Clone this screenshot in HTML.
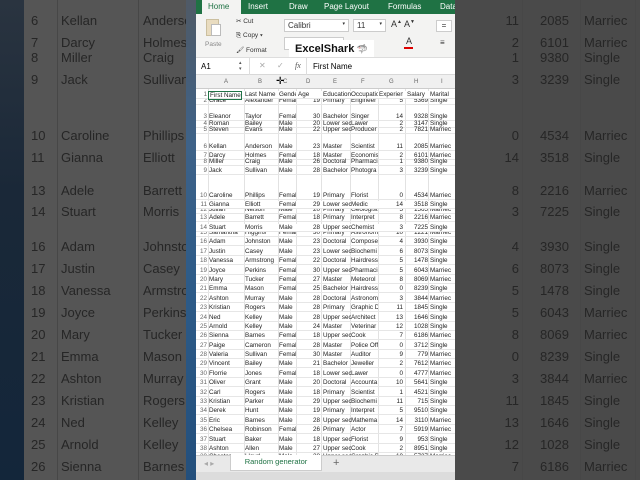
<!DOCTYPE html>
<html><head><meta charset="utf-8"><style>
*{margin:0;padding:0;box-sizing:border-box}
body{width:640px;height:480px;overflow:hidden;background:#4b4b4b;font-family:"Liberation Sans",sans-serif;position:relative}
.abs{position:absolute}
#L{left:0;top:0;width:186px;height:480px;background:#555;overflow:hidden}
#L .sky{position:absolute;left:0;top:0;width:24px;height:480px;background:linear-gradient(#2a3440,#1a2838 40%,#13263a)}
#L .r,#R .r{position:absolute;font-size:13px;color:#262626;height:14px;line-height:14px}
.vl{position:absolute;top:0;width:1px;height:480px;background:#474747}
#R{left:455px;top:0;width:185px;height:480px;background:#4a4a4a;overflow:hidden}
#strip{left:186px;top:0;width:10px;height:480px;background:linear-gradient(#505a66,#3e6288 30%,#2d5b88 60%,#234f7c)}
#W{left:196px;top:0;width:259px;height:480px;background:#fff;overflow:hidden}
.tabs{position:absolute;left:0;top:0;width:259px;height:14px;background:#1f7244;color:#fff;font-size:8px}
.tabs span{position:absolute;top:2px}
.rib{position:absolute;left:0;top:14px;width:259px;height:43px;background:#f3f3f2;font-size:6.5px;color:#333}
.fbar{position:absolute;left:0;top:57px;width:259px;height:18px;background:#fff;border-top:1px solid #ddd;border-bottom:1px solid #d8d8d8;font-size:8px}
.ch{position:absolute;left:0;top:75px;width:259px;height:14px;background:#f0f0f0;border-bottom:1px solid #ccc;font-size:6px;color:#666}
.ch span{position:absolute;top:4px}
.grid{position:absolute;left:0;top:89px;width:259px;height:366px}
.g{position:absolute;top:0;width:1px;height:366px;background:#e2e2e2}
.row{position:absolute;left:0;width:259px;height:8px;font-size:6.3px;line-height:8px;color:#222;border-bottom:1px solid #e6e6e6}
.row span{position:absolute;white-space:nowrap;overflow:hidden}
.n{left:0;width:11px;text-align:right;color:#666}
.a{left:13px;width:34px}.b{left:49px;width:33px}.c{left:83px;width:17px}
.d{left:101px;width:23px;text-align:right}.e{left:127px;width:28px}.f{left:155px;width:27px}
.gg{left:183px;width:24px;text-align:right}.h{left:210px;width:22px;text-align:right}.i{left:234px;width:25px}
.stab{position:absolute;left:0;top:455px;width:259px;height:17px;background:#e9e9e9;border-top:1px solid #ccc}
.stat{position:absolute;left:0;top:472px;width:259px;height:8px;background:#dcdcdc}
</style></head><body>
<div id="L" class="abs"><div class="sky"></div>
<div class="vl" style="left:57px"></div><div class="vl" style="left:138px"></div>
<div class="r" style="left:31px;top:14px">6</div><div class="r" style="left:61px;top:14px">Kellan</div><div class="r" style="left:143px;top:14px">Anderson</div>
<div class="r" style="left:31px;top:36px">7</div><div class="r" style="left:61px;top:36px">Darcy</div><div class="r" style="left:143px;top:36px">Holmes</div>
<div class="r" style="left:31px;top:51px">8</div><div class="r" style="left:61px;top:51px">Miller</div><div class="r" style="left:143px;top:51px">Craig</div>
<div class="r" style="left:31px;top:73px">9</div><div class="r" style="left:61px;top:73px">Jack</div><div class="r" style="left:143px;top:73px">Sullivan</div>
<div class="r" style="left:31px;top:129px">10</div><div class="r" style="left:61px;top:129px">Caroline</div><div class="r" style="left:143px;top:129px">Phillips</div>
<div class="r" style="left:31px;top:151px">11</div><div class="r" style="left:61px;top:151px">Gianna</div><div class="r" style="left:143px;top:151px">Elliott</div>
<div class="r" style="left:31px;top:184px">13</div><div class="r" style="left:61px;top:184px">Adele</div><div class="r" style="left:143px;top:184px">Barrett</div>
<div class="r" style="left:31px;top:205px">14</div><div class="r" style="left:61px;top:205px">Stuart</div><div class="r" style="left:143px;top:205px">Morris</div>
<div class="r" style="left:31px;top:240px">16</div><div class="r" style="left:61px;top:240px">Adam</div><div class="r" style="left:143px;top:240px">Johnston</div>
<div class="r" style="left:31px;top:262px">17</div><div class="r" style="left:61px;top:262px">Justin</div><div class="r" style="left:143px;top:262px">Casey</div>
<div class="r" style="left:31px;top:284px">18</div><div class="r" style="left:61px;top:284px">Vanessa</div><div class="r" style="left:143px;top:284px">Armstrong</div>
<div class="r" style="left:31px;top:306px">19</div><div class="r" style="left:61px;top:306px">Joyce</div><div class="r" style="left:143px;top:306px">Perkins</div>
<div class="r" style="left:31px;top:328px">20</div><div class="r" style="left:61px;top:328px">Mary</div><div class="r" style="left:143px;top:328px">Tucker</div>
<div class="r" style="left:31px;top:350px">21</div><div class="r" style="left:61px;top:350px">Emma</div><div class="r" style="left:143px;top:350px">Mason</div>
<div class="r" style="left:31px;top:372px">22</div><div class="r" style="left:61px;top:372px">Ashton</div><div class="r" style="left:143px;top:372px">Murray</div>
<div class="r" style="left:31px;top:394px">23</div><div class="r" style="left:61px;top:394px">Kristian</div><div class="r" style="left:143px;top:394px">Rogers</div>
<div class="r" style="left:31px;top:416px">24</div><div class="r" style="left:61px;top:416px">Ned</div><div class="r" style="left:143px;top:416px">Kelley</div>
<div class="r" style="left:31px;top:438px">25</div><div class="r" style="left:61px;top:438px">Arnold</div><div class="r" style="left:143px;top:438px">Kelley</div>
<div class="r" style="left:31px;top:460px">26</div><div class="r" style="left:61px;top:460px">Sienna</div><div class="r" style="left:143px;top:460px">Barnes</div>
</div>
<div id="strip" class="abs"></div>
<div id="R" class="abs">
<div class="vl" style="left:67px"></div><div class="vl" style="left:125px"></div><div class="vl" style="left:180px"></div>
<div class="r" style="left:40px;top:14px;width:24px;text-align:right">11</div><div class="r" style="left:85px;top:14px">2085</div><div class="r" style="left:129px;top:14px">Marriec</div>
<div class="r" style="left:40px;top:36px;width:24px;text-align:right">2</div><div class="r" style="left:85px;top:36px">6101</div><div class="r" style="left:129px;top:36px">Marriec</div>
<div class="r" style="left:40px;top:51px;width:24px;text-align:right">1</div><div class="r" style="left:85px;top:51px">9380</div><div class="r" style="left:129px;top:51px">Single</div>
<div class="r" style="left:40px;top:73px;width:24px;text-align:right">3</div><div class="r" style="left:85px;top:73px">3239</div><div class="r" style="left:129px;top:73px">Single</div>
<div class="r" style="left:40px;top:129px;width:24px;text-align:right">0</div><div class="r" style="left:85px;top:129px">4534</div><div class="r" style="left:129px;top:129px">Marriec</div>
<div class="r" style="left:40px;top:151px;width:24px;text-align:right">14</div><div class="r" style="left:85px;top:151px">3518</div><div class="r" style="left:129px;top:151px">Single</div>
<div class="r" style="left:40px;top:184px;width:24px;text-align:right">8</div><div class="r" style="left:85px;top:184px">2216</div><div class="r" style="left:129px;top:184px">Marriec</div>
<div class="r" style="left:40px;top:205px;width:24px;text-align:right">3</div><div class="r" style="left:85px;top:205px">7225</div><div class="r" style="left:129px;top:205px">Single</div>
<div class="r" style="left:40px;top:240px;width:24px;text-align:right">4</div><div class="r" style="left:85px;top:240px">3930</div><div class="r" style="left:129px;top:240px">Single</div>
<div class="r" style="left:40px;top:262px;width:24px;text-align:right">6</div><div class="r" style="left:85px;top:262px">8073</div><div class="r" style="left:129px;top:262px">Single</div>
<div class="r" style="left:40px;top:284px;width:24px;text-align:right">5</div><div class="r" style="left:85px;top:284px">1478</div><div class="r" style="left:129px;top:284px">Single</div>
<div class="r" style="left:40px;top:306px;width:24px;text-align:right">5</div><div class="r" style="left:85px;top:306px">6043</div><div class="r" style="left:129px;top:306px">Marriec</div>
<div class="r" style="left:40px;top:328px;width:24px;text-align:right">8</div><div class="r" style="left:85px;top:328px">8069</div><div class="r" style="left:129px;top:328px">Marriec</div>
<div class="r" style="left:40px;top:350px;width:24px;text-align:right">0</div><div class="r" style="left:85px;top:350px">8239</div><div class="r" style="left:129px;top:350px">Single</div>
<div class="r" style="left:40px;top:372px;width:24px;text-align:right">3</div><div class="r" style="left:85px;top:372px">3844</div><div class="r" style="left:129px;top:372px">Marriec</div>
<div class="r" style="left:40px;top:394px;width:24px;text-align:right">11</div><div class="r" style="left:85px;top:394px">1845</div><div class="r" style="left:129px;top:394px">Single</div>
<div class="r" style="left:40px;top:416px;width:24px;text-align:right">13</div><div class="r" style="left:85px;top:416px">1646</div><div class="r" style="left:129px;top:416px">Single</div>
<div class="r" style="left:40px;top:438px;width:24px;text-align:right">12</div><div class="r" style="left:85px;top:438px">1028</div><div class="r" style="left:129px;top:438px">Single</div>
<div class="r" style="left:40px;top:460px;width:24px;text-align:right">7</div><div class="r" style="left:85px;top:460px">6186</div><div class="r" style="left:129px;top:460px">Marriec</div>
</div>

<div id="W" class="abs">
<div class="tabs">
<div class="abs" style="left:6px;top:0;width:39px;height:14px;background:#f3f3f2"></div>
<span style="left:12px;color:#1f7244">Home</span><span style="left:52px">Insert</span><span style="left:93px">Draw</span><span style="left:128px">Page Layout</span><span style="left:192px">Formulas</span><span style="left:244px">Data</span>
</div>
<div class="rib">
<div class="abs" style="left:10px;top:5px;width:13px;height:17px;background:#e9dcc0;border:1px solid #cbbf9f"></div>
<div class="abs" style="left:15px;top:10px;width:10px;height:12px;background:#fff;border:1px solid #bbb"></div>
<span class="abs" style="left:9px;top:27px;color:#888">Paste</span>
<span class="abs" style="left:40px;top:3px">✂ Cut</span>
<span class="abs" style="left:40px;top:18px">⎘ Copy ▾</span>
<span class="abs" style="left:40px;top:32px">🖌 Format</span>
<div class="abs" style="left:88px;top:5px;width:65px;height:13px;background:#fff;border:1px solid #ccc;font-size:8px;padding:1px 3px">Calibri<span style="float:right;font-size:5px">▾</span></div>
<div class="abs" style="left:157px;top:5px;width:33px;height:13px;background:#fff;border:1px solid #ccc;font-size:8px;padding:1px 3px">11<span style="float:right;font-size:5px">▾</span></div>
<span class="abs" style="left:195px;top:5px;font-size:9px">A<sup style="font-size:5px">▲</sup> A<sup style="font-size:5px">▼</sup></span>
<div class="abs" style="left:240px;top:6px;width:16px;height:12px;border:1px solid #ccc;background:#fff;font-size:8px;text-align:center">=</div>
<div class="abs" style="left:88px;top:23px;width:60px;height:13px;background:#fff;border:1px solid #ccc"></div>
<span class="abs" style="left:210px;top:22px;font-size:9px">A</span>
<div class="abs" style="left:208px;top:33px;width:9px;height:2px;background:#d00"></div>
<span class="abs" style="left:244px;top:24px;font-size:8px">≡</span>
<div class="abs" style="left:93px;top:26px;width:85px;height:17px;background:#fff;font-size:11px;font-weight:bold;color:#111;padding:3px 0 0 6px">ExcelShark<span style="color:#5a8aa8;font-size:9px"> 🦈</span></div>
</div>
<div class="fbar">
<span class="abs" style="left:5px;top:4px">A1</span><span class="abs" style="left:43px;top:2px;font-size:5px;color:#555">▴<br>▾</span>
<div class="abs" style="left:53px;top:0;width:1px;height:17px;background:#ddd"></div>
<span class="abs" style="left:63px;top:3px;color:#aaa">✕</span><span class="abs" style="left:81px;top:3px;color:#aaa">✓</span>
<span class="abs" style="left:99px;top:3px;font-style:italic;font-family:'Liberation Serif',serif;color:#555">fx</span>
<div class="abs" style="left:110px;top:0;width:1px;height:17px;background:#ddd"></div>
<span class="abs" style="left:117px;top:4px">First Name</span>
</div>
<div class="ch">
<span style="left:28px">A</span><span style="left:62px">B</span><span style="left:87px">C</span><span style="left:110px">D</span><span style="left:137px">E</span><span style="left:165px">F</span><span style="left:193px">G</span><span style="left:218px">H</span><span style="left:245px">I</span>
<span style="left:80px;top:1px;font-size:10px;color:#000">✛</span>
</div>
<div class="grid">
<div class="g" style="left:12px"></div><div class="g" style="left:48px"></div><div class="g" style="left:82px"></div><div class="g" style="left:100px"></div><div class="g" style="left:125px"></div><div class="g" style="left:154px"></div><div class="g" style="left:182px"></div><div class="g" style="left:209px"></div><div class="g" style="left:232px"></div>
</div>
<div class="abs" style="left:0;top:89px;width:259px;height:366px;overflow:hidden">
<div class="row" style="top:8px;background:transparent"><span class="n">2</span><span class="a">Grace</span><span class="b">Alexander</span><span class="c">Femal</span><span class="d">19</span><span class="e">Primary</span><span class="f">Engineer</span><span class="gg">5</span><span class="h">5369</span><span class="i">Single</span></div>
<div class="row" style="top:2px;background:#fff"><span class="n">1</span><span class="a" style="border:1px solid #217346;height:9px;line-height:7px;left:12px;padding-left:1px">First Name</span><span class="b">Last Name</span><span class="c">Gende</span><span class="d" style="text-align:left;left:102px">Age</span><span class="e">Education</span><span class="f">Occupation</span><span class="gg" style="text-align:left">Experience</span><span class="h" style="text-align:left;left:211px">Salary</span><span class="i">Marital</span></div>
<div class="row" style="top:24px"><span class="n">3</span><span class="a">Eleanor</span><span class="b">Taylor</span><span class="c">Femal</span><span class="d">30</span><span class="e">Bachelor</span><span class="f">Singer</span><span class="gg">14</span><span class="h">9328</span><span class="i">Single</span></div>
<div class="row" style="top:31px"><span class="n">4</span><span class="a">Roman</span><span class="b">Bailey</span><span class="c">Male</span><span class="d">20</span><span class="e">Lower sec</span><span class="f">Lawer</span><span class="gg">2</span><span class="h">3147</span><span class="i">Single</span></div>
<div class="row" style="top:37px"><span class="n">5</span><span class="a">Steven</span><span class="b">Evans</span><span class="c">Male</span><span class="d">22</span><span class="e">Upper sec</span><span class="f">Producer</span><span class="gg">2</span><span class="h">7821</span><span class="i">Marriec</span></div>
<div class="row" style="top:54px"><span class="n">6</span><span class="a">Kellan</span><span class="b">Anderson</span><span class="c">Male</span><span class="d">23</span><span class="e">Master</span><span class="f">Scientist</span><span class="gg">11</span><span class="h">2085</span><span class="i">Marriec</span></div>
<div class="row" style="top:63px"><span class="n">7</span><span class="a">Darcy</span><span class="b">Holmes</span><span class="c">Femal</span><span class="d">18</span><span class="e">Master</span><span class="f">Economis</span><span class="gg">2</span><span class="h">6101</span><span class="i">Marriec</span></div>
<div class="row" style="top:69px"><span class="n">8</span><span class="a">Miller</span><span class="b">Craig</span><span class="c">Male</span><span class="d">26</span><span class="e">Doctoral</span><span class="f">Pharmaci</span><span class="gg">1</span><span class="h">9380</span><span class="i">Single</span></div>
<div class="row" style="top:78px"><span class="n">9</span><span class="a">Jack</span><span class="b">Sullivan</span><span class="c">Male</span><span class="d">28</span><span class="e">Bachelor</span><span class="f">Photogra</span><span class="gg">3</span><span class="h">3239</span><span class="i">Single</span></div>
<div class="row" style="top:103px"><span class="n">10</span><span class="a">Caroline</span><span class="b">Phillips</span><span class="c">Femal</span><span class="d">19</span><span class="e">Primary</span><span class="f">Florist</span><span class="gg">0</span><span class="h">4534</span><span class="i">Marriec</span></div>
<div class="row" style="top:117px"><span class="n">12</span><span class="a">Julian</span><span class="b">Nelson</span><span class="c">Male</span><span class="d">20</span><span class="e">Primary</span><span class="f">Geologist</span><span class="gg">5</span><span class="h">1565</span><span class="i">Marriec</span></div>
<div class="row" style="top:112px;background:#fff"><span class="n">11</span><span class="a">Gianna</span><span class="b">Elliott</span><span class="c">Femal</span><span class="d">29</span><span class="e">Lower sec</span><span class="f">Medic</span><span class="gg">14</span><span class="h">3518</span><span class="i">Single</span></div>
<div class="row" style="top:125px"><span class="n">13</span><span class="a">Adele</span><span class="b">Barrett</span><span class="c">Femal</span><span class="d">18</span><span class="e">Primary</span><span class="f">Interpret</span><span class="gg">8</span><span class="h">2216</span><span class="i">Marriec</span></div>
<div class="row" style="top:140px"><span class="n">15</span><span class="a">Samantha</span><span class="b">Higgins</span><span class="c">Femal</span><span class="d">30</span><span class="e">Primary</span><span class="f">Astronom</span><span class="gg">10</span><span class="h">1221</span><span class="i">Marriec</span></div>
<div class="row" style="top:135px;background:#fff"><span class="n">14</span><span class="a">Stuart</span><span class="b">Morris</span><span class="c">Male</span><span class="d">28</span><span class="e">Upper sec</span><span class="f">Chemist</span><span class="gg">3</span><span class="h">7225</span><span class="i">Single</span></div>
<div class="row" style="top:149px"><span class="n">16</span><span class="a">Adam</span><span class="b">Johnston</span><span class="c">Male</span><span class="d">23</span><span class="e">Doctoral</span><span class="f">Compose</span><span class="gg">4</span><span class="h">3930</span><span class="i">Single</span></div>
<div class="row" style="top:159px"><span class="n">17</span><span class="a">Justin</span><span class="b">Casey</span><span class="c">Male</span><span class="d">23</span><span class="e">Lower sec</span><span class="f">Biochemi</span><span class="gg">6</span><span class="h">8073</span><span class="i">Single</span></div>
<div class="row" style="top:168px"><span class="n">18</span><span class="a">Vanessa</span><span class="b">Armstrong</span><span class="c">Femal</span><span class="d">22</span><span class="e">Doctoral</span><span class="f">Hairdress</span><span class="gg">5</span><span class="h">1478</span><span class="i">Single</span></div>
<div class="row" style="top:178px"><span class="n">19</span><span class="a">Joyce</span><span class="b">Perkins</span><span class="c">Femal</span><span class="d">30</span><span class="e">Upper sec</span><span class="f">Pharmaci</span><span class="gg">5</span><span class="h">6043</span><span class="i">Marriec</span></div>
<div class="row" style="top:187px"><span class="n">20</span><span class="a">Mary</span><span class="b">Tucker</span><span class="c">Femal</span><span class="d">27</span><span class="e">Master</span><span class="f">Meteorol</span><span class="gg">8</span><span class="h">8069</span><span class="i">Marriec</span></div>
<div class="row" style="top:196px"><span class="n">21</span><span class="a">Emma</span><span class="b">Mason</span><span class="c">Femal</span><span class="d">25</span><span class="e">Bachelor</span><span class="f">Hairdress</span><span class="gg">0</span><span class="h">8239</span><span class="i">Single</span></div>
<div class="row" style="top:206px"><span class="n">22</span><span class="a">Ashton</span><span class="b">Murray</span><span class="c">Male</span><span class="d">28</span><span class="e">Doctoral</span><span class="f">Astronom</span><span class="gg">3</span><span class="h">3844</span><span class="i">Marriec</span></div>
<div class="row" style="top:215px"><span class="n">23</span><span class="a">Kristian</span><span class="b">Rogers</span><span class="c">Male</span><span class="d">28</span><span class="e">Primary</span><span class="f">Graphic D</span><span class="gg">11</span><span class="h">1845</span><span class="i">Single</span></div>
<div class="row" style="top:225px"><span class="n">24</span><span class="a">Ned</span><span class="b">Kelley</span><span class="c">Male</span><span class="d">28</span><span class="e">Upper sec</span><span class="f">Architect</span><span class="gg">13</span><span class="h">1646</span><span class="i">Single</span></div>
<div class="row" style="top:234px"><span class="n">25</span><span class="a">Arnold</span><span class="b">Kelley</span><span class="c">Male</span><span class="d">24</span><span class="e">Master</span><span class="f">Veterinar</span><span class="gg">12</span><span class="h">1028</span><span class="i">Single</span></div>
<div class="row" style="top:243px"><span class="n">26</span><span class="a">Sienna</span><span class="b">Barnes</span><span class="c">Femal</span><span class="d">18</span><span class="e">Upper sec</span><span class="f">Cook</span><span class="gg">7</span><span class="h">6186</span><span class="i">Marriec</span></div>
<div class="row" style="top:253px"><span class="n">27</span><span class="a">Paige</span><span class="b">Cameron</span><span class="c">Femal</span><span class="d">28</span><span class="e">Master</span><span class="f">Police Off</span><span class="gg">0</span><span class="h">3712</span><span class="i">Single</span></div>
<div class="row" style="top:262px"><span class="n">28</span><span class="a">Valeria</span><span class="b">Sullivan</span><span class="c">Femal</span><span class="d">30</span><span class="e">Master</span><span class="f">Auditor</span><span class="gg">9</span><span class="h">779</span><span class="i">Marriec</span></div>
<div class="row" style="top:271px"><span class="n">29</span><span class="a">Vincent</span><span class="b">Bailey</span><span class="c">Male</span><span class="d">21</span><span class="e">Bachelor</span><span class="f">Jeweller</span><span class="gg">2</span><span class="h">7612</span><span class="i">Marriec</span></div>
<div class="row" style="top:281px"><span class="n">30</span><span class="a">Florrie</span><span class="b">Jones</span><span class="c">Femal</span><span class="d">18</span><span class="e">Lower sec</span><span class="f">Lawer</span><span class="gg">0</span><span class="h">4777</span><span class="i">Marriec</span></div>
<div class="row" style="top:290px"><span class="n">31</span><span class="a">Oliver</span><span class="b">Grant</span><span class="c">Male</span><span class="d">20</span><span class="e">Doctoral</span><span class="f">Accounta</span><span class="gg">10</span><span class="h">5641</span><span class="i">Single</span></div>
<div class="row" style="top:300px"><span class="n">32</span><span class="a">Carl</span><span class="b">Rogers</span><span class="c">Male</span><span class="d">18</span><span class="e">Primary</span><span class="f">Scientist</span><span class="gg">1</span><span class="h">4521</span><span class="i">Single</span></div>
<div class="row" style="top:309px"><span class="n">33</span><span class="a">Kristian</span><span class="b">Parker</span><span class="c">Male</span><span class="d">29</span><span class="e">Upper sec</span><span class="f">Biochemi</span><span class="gg">11</span><span class="h">715</span><span class="i">Single</span></div>
<div class="row" style="top:318px"><span class="n">34</span><span class="a">Derek</span><span class="b">Hunt</span><span class="c">Male</span><span class="d">19</span><span class="e">Primary</span><span class="f">Interpret</span><span class="gg">5</span><span class="h">9510</span><span class="i">Single</span></div>
<div class="row" style="top:328px"><span class="n">35</span><span class="a">Eric</span><span class="b">Barnes</span><span class="c">Male</span><span class="d">28</span><span class="e">Upper sec</span><span class="f">Mathema</span><span class="gg">14</span><span class="h">3110</span><span class="i">Marriec</span></div>
<div class="row" style="top:337px"><span class="n">36</span><span class="a">Chelsea</span><span class="b">Robinson</span><span class="c">Femal</span><span class="d">26</span><span class="e">Primary</span><span class="f">Actor</span><span class="gg">7</span><span class="h">5919</span><span class="i">Marriec</span></div>
<div class="row" style="top:347px"><span class="n">37</span><span class="a">Stuart</span><span class="b">Baker</span><span class="c">Male</span><span class="d">18</span><span class="e">Upper sec</span><span class="f">Florist</span><span class="gg">9</span><span class="h">953</span><span class="i">Single</span></div>
<div class="row" style="top:356px"><span class="n">38</span><span class="a">Ashton</span><span class="b">Allen</span><span class="c">Male</span><span class="d">27</span><span class="e">Upper sec</span><span class="f">Cook</span><span class="gg">2</span><span class="h">8951</span><span class="i">Single</span></div>
<div class="row" style="top:364px"><span class="n">39</span><span class="a">Chester</span><span class="b">Lloyd</span><span class="c">Male</span><span class="d">28</span><span class="e">Upper sec</span><span class="f">Graphic D</span><span class="gg">10</span><span class="h">5727</span><span class="i">Marriec</span></div>
</div>
<div class="stab">
<span class="abs" style="left:8px;top:3px;font-size:8px;color:#aaa">◂ ▸</span>
<div class="abs" style="left:34px;top:-1px;width:92px;height:16px;background:#fff;border:1px solid #ccc;border-top:none;font-size:7.5px;color:#1f7244;text-align:center;line-height:14px">Random generator</div>
<span class="abs" style="left:137px;top:1px;font-size:11px;color:#666">+</span>
</div>
<div class="stat"></div>
</div>
</body></html>
